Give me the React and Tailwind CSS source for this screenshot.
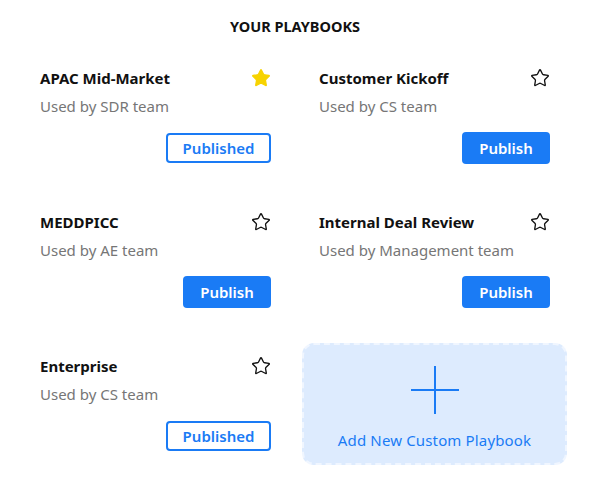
import { Star } from "lucide-react";

const playbooks = [
  { name: "APAC Mid-Market", team: "SDR", starred: true, published: true },
  { name: "Customer Kickoff", team: "CS", starred: false, published: false },
  { name: "MEDDPICC", team: "AE", starred: false, published: false },
  { name: "Internal Deal Review", team: "Management", starred: false, published: false },
  { name: "Enterprise", team: "CS", starred: false, published: true },
];

function PlaybookCard({ item }) {
  return (
    <div className="h-[122px] px-[17px] pt-[12px] flex flex-col">
      <div className="flex items-center justify-between">
        <h3 className="text-[15px] leading-[22px] font-bold text-[#111]">{item.name}</h3>
        {item.starred ? (
          <Star size={20} fill="#f7d300" stroke="#f7d300" strokeWidth={1.5} />
        ) : (
          <Star size={20} stroke="#111" strokeWidth={1.6} />
        )}
      </div>
      <p className="mt-[6px] text-[15px] leading-[22px] text-[#767676]">
        Used by {item.team} team
      </p>
      <div className="mt-[16px] flex justify-end">
        {item.published ? (
          <button className="h-[30px] w-[105px] rounded-[4px] border-2 border-[#1a7bf5] bg-white text-[15px] font-semibold text-[#1a7bf5]">
            Published
          </button>
        ) : (
          <button className="-mt-[1px] h-[32px] w-[88px] rounded-[4px] bg-[#1a7bf5] text-[15px] font-semibold text-white">
            Publish
          </button>
        )}
      </div>
    </div>
  );
}

export default function App() {
  return (
    <div
      className="min-h-screen bg-white px-[23px] pt-[16px]"
      style={{ fontFamily: '"Noto Sans", "Open Sans", sans-serif' }}
    >
      <h2 className="text-center text-[14.5px] leading-[20px] font-bold text-[#111] mb-[19px]">
        YOUR PLAYBOOKS
      </h2>

      <div className="grid grid-cols-2 gap-x-[14px] gap-y-[22px]">
        {playbooks.map((p) => (
          <PlaybookCard key={p.name} item={p} />
        ))}

        {/* add new */}
        <button className="h-[122px] rounded-[12px] border-2 border-dashed border-[#f0f6ff] bg-[#ddebfe] flex flex-col items-center pt-[21px]">
          <svg width="48" height="48" viewBox="0 0 48 48">
            <path d="M24 0V48M0 24H48" stroke="#1a7bf5" strokeWidth="2" />
          </svg>
          <span className="mt-[15px] text-[15px] leading-[22px] tracking-[0.15px] text-[#1a7bf5]">
            Add New Custom Playbook
          </span>
        </button>
      </div>
    </div>
  );
}
